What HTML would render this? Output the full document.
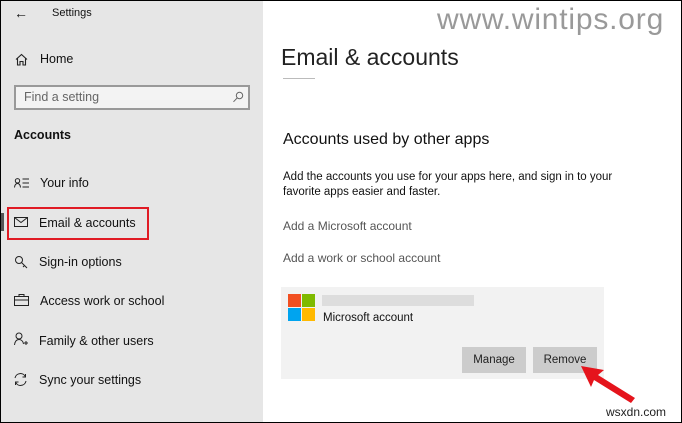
<!DOCTYPE html>
<html><head><style>
*{margin:0;padding:0;box-sizing:border-box}
body{width:682px;height:423px;overflow:hidden;font-family:"Liberation Sans",sans-serif;background:#fff;position:relative}
.frame{position:absolute;left:0;top:0;width:682px;height:423px;border:1px solid #000;z-index:10;pointer-events:none}
.side{position:absolute;left:0;top:0;width:263px;height:423px;background:#e6e6e6}
.t{position:absolute;white-space:nowrap;color:#111}
.ico{position:absolute}
</style></head><body>
<div class="side">
<div class="t" style="left:14px;top:5px;font-size:14px">&#8592;</div>
<div class="t" style="left:52px;top:7px;font-size:11px">Settings</div>
<svg class="ico" style="left:15px;top:53px" width="13" height="13" viewBox="0 0 13 13"><path d="M1 6.5L6.5 1.5L12 6.5M2.5 5.5V12H5V8.5H8V12H10.5V5.5" fill="none" stroke="#222" stroke-width="1.1"/></svg>
<div class="t" style="left:40px;top:52px;font-size:12.5px">Home</div>
<div style="position:absolute;left:14px;top:85px;width:236px;height:25px;border:2px solid #999;background:#f3f3f3"></div>
<div class="t" style="left:24px;top:90px;font-size:12.5px;color:#666">Find a setting</div>
<svg class="ico" style="left:232px;top:91px" width="12" height="12" viewBox="0 0 12 12"><circle cx="7.5" cy="4.5" r="3.2" fill="none" stroke="#666" stroke-width="1"/><path d="M5.3 6.8L1.5 10.8" stroke="#666" stroke-width="1"/></svg>
<div class="t" style="left:14px;top:128px;font-size:12.5px;font-weight:bold">Accounts</div>
<svg class="ico" style="left:14px;top:178px" width="16" height="10" viewBox="0 0 16 10"><circle cx="3.5" cy="2.8" r="2.2" fill="none" stroke="#222"/><path d="M0.5 9.5C0.8 6.5 2 5.5 3.5 5.5S6.2 6.5 6.5 9.5M8.5 1H15M8.5 5H15M8.5 9H15" stroke="#222" fill="none"/></svg>
<div class="t" style="left:40px;top:176px;font-size:12.5px">Your info</div>
<div style="position:absolute;left:0;top:213px;width:4px;height:18px;background:#555"></div>
<div style="position:absolute;left:7px;top:207px;width:142px;height:33px;border:2px solid #e01b24"></div>
<svg class="ico" style="left:14px;top:217px" width="14" height="10" viewBox="0 0 14 10"><rect x="0.5" y="0.5" width="13" height="9" fill="none" stroke="#222"/><path d="M0.5 0.5L7 5.5L13.5 0.5" fill="none" stroke="#222"/></svg>
<div class="t" style="left:39px;top:216px;font-size:12.5px">Email &amp; accounts</div>
<svg class="ico" style="left:14px;top:255px" width="15" height="15" viewBox="0 0 15 15"><circle cx="5" cy="5" r="3.5" fill="none" stroke="#222"/><path d="M7.5 7.5L13 13M10.5 10.5L9 12" stroke="#222" fill="none"/></svg>
<div class="t" style="left:39px;top:255px;font-size:12.5px">Sign-in options</div>
<svg class="ico" style="left:14px;top:294px" width="15" height="12" viewBox="0 0 15 12"><rect x="0.5" y="2.5" width="14" height="9" fill="none" stroke="#222"/><path d="M5 2.5V0.5H10V2.5M0.5 6H14.5" stroke="#222" fill="none"/></svg>
<div class="t" style="left:40px;top:294px;font-size:12.5px">Access work or school</div>
<svg class="ico" style="left:14px;top:332px" width="14" height="14" viewBox="0 0 14 14"><circle cx="5" cy="4" r="3" fill="none" stroke="#222"/><path d="M0.5 13C1 9 3 7.5 5 7.5S9 9 9.5 12M10 11H14M12 9V13" stroke="#222" fill="none"/></svg>
<div class="t" style="left:39px;top:334px;font-size:12.5px">Family &amp; other users</div>
<svg class="ico" style="left:13px;top:372px" width="15" height="15" viewBox="0 0 15 15"><path d="M2 6A5.5 5.5 0 0 1 12.5 5M13 9A5.5 5.5 0 0 1 2.5 10M12.5 2V5H9.5M2.5 13V10H5.5" fill="none" stroke="#222"/></svg>
<div class="t" style="left:39px;top:373px;font-size:12.5px">Sync your settings</div>
</div>
<div class="t" style="left:437px;top:3px;font-size:30px;color:#999;letter-spacing:0.8px">www.wintips.org</div>
<div class="t" style="left:281px;top:44px;font-size:23px;color:#222">Email &amp; accounts</div>
<div style="position:absolute;left:283px;top:78px;width:32px;height:1px;background:#bbb"></div>
<div class="t" style="left:283px;top:131px;font-size:16px">Accounts used by other apps</div>
<div class="t" style="left:283px;top:170px;font-size:11.5px;line-height:15px">Add the accounts you use for your apps here, and sign in to your<br>favorite apps easier and faster.</div>
<div class="t" style="left:283px;top:219px;font-size:12px;color:#555">Add a Microsoft account</div>
<div class="t" style="left:283px;top:251px;font-size:12px;color:#555">Add a work or school account</div>
<div style="position:absolute;left:281px;top:287px;width:323px;height:92px;background:#f2f2f2"></div>
<div style="position:absolute;left:288px;top:294px;width:13px;height:13px;background:#f25022"></div>
<div style="position:absolute;left:302px;top:294px;width:13px;height:13px;background:#7fba00"></div>
<div style="position:absolute;left:288px;top:308px;width:13px;height:13px;background:#00a4ef"></div>
<div style="position:absolute;left:302px;top:308px;width:13px;height:13px;background:#ffb900"></div>
<div style="position:absolute;left:322px;top:295px;width:152px;height:11px;background:#ddd"></div>
<div class="t" style="left:323px;top:312px;font-size:11.5px">Microsoft account</div>
<div style="position:absolute;left:462px;top:347px;width:64px;height:26px;background:#ccc;font-size:11.5px;text-align:center;line-height:26px;color:#222">Manage</div>
<div style="position:absolute;left:533px;top:347px;width:64px;height:26px;background:#ccc;font-size:11.5px;text-align:center;line-height:26px;color:#222">Remove</div>
<svg class="ico" style="left:578px;top:362px" width="60" height="42" viewBox="0 0 60 42"><path d="M3 4L26 8L20 13L57 36L53 41L16 18L13 25Z" fill="#e5141c"/></svg>
<div class="t" style="left:606px;top:405px;font-size:12px;color:#222">wsxdn.com</div>
<div class="frame"></div>
</body></html>
